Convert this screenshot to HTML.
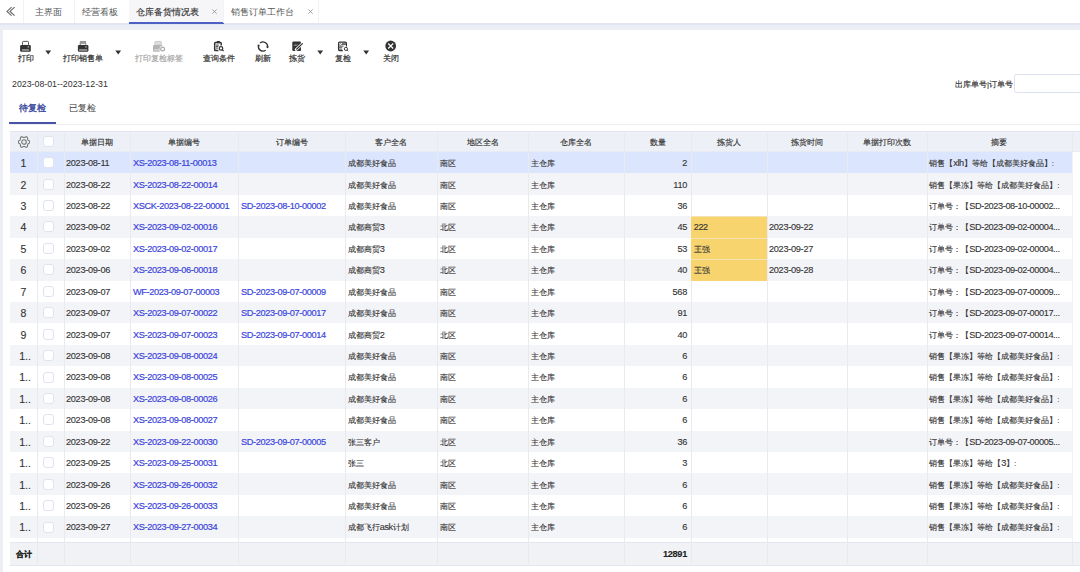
<!DOCTYPE html><html><head><meta charset="utf-8"><style>*{box-sizing:border-box;margin:0;padding:0}
html,body{width:1080px;height:572px;overflow:hidden;background:#fff;font-family:"Liberation Sans",sans-serif;color:#333}
body{position:relative}
.abs{position:absolute;white-space:nowrap}
#tabbar{position:absolute;left:0;top:0;width:1080px;height:23px;background:#fff}
#band{position:absolute;left:0;top:23px;width:1080px;height:549px;background:#eceef6}
#panel{position:absolute;left:2.5px;top:30px;width:1077.5px;height:542px;background:#fff}
.tab{position:absolute;top:0px;height:23px;line-height:23px;font-size:9.45px;color:#555;white-space:nowrap;}
.tdiv{position:absolute;top:0;width:1px;height:23px;background:#f1f2f5}
.tb-label{position:absolute;top:54px;font-size:8px;line-height:10px;color:#333;white-space:nowrap;-webkit-text-stroke:0.2px currentColor}
.caret{position:absolute;width:0;height:0;border-left:2.8px solid transparent;border-right:2.8px solid transparent;border-top:4px solid #333}
#tbl .hdr{position:absolute;left:10px;width:1070px;background:#edf0f6;border-top:1px solid #e3e6ee;box-shadow:inset 0 -1px 0 #e8ebf2}
.vl{position:absolute;width:1px;background:#e8eaf0}
.hl{position:absolute;left:10px;width:1062.2px;height:1px;background:#eceef3}
.ht{position:absolute;text-align:center;font-size:8px;color:#333;white-space:nowrap;padding-top:1px;-webkit-text-stroke:0.15px #333}
.row{position:absolute;left:10px;width:1062.2px;background:#fff}
.row.odd{background:#f3f4f8}
.row.sel{background:#dbe5fd}
.yel{position:absolute;background:#f7d46e;box-shadow:0 -1px 0 #f3e3b6}
.t{position:absolute;font-size:8px;color:#333;white-space:nowrap;padding-left:2.7px;padding-top:1.2px;overflow:hidden;-webkit-text-stroke:0.12px currentColor}
.t.idx{text-align:center;padding-left:0;font-size:10.5px}
.t.lnk{color:#3b45dd;font-size:9.2px;letter-spacing:-0.35px;padding-left:3px;-webkit-text-stroke:0.2px #3b45dd}
.t.dt{font-size:9.2px;letter-spacing:-0.3px;padding-left:2px}
.t.num{text-align:right;padding-right:4px;font-size:9.2px;letter-spacing:-0.3px}
.cb{position:absolute;width:11px;height:11px;border:1px solid #dde3f0;border-radius:3px;background:#fff}
.gear{position:absolute}
.ftr{position:absolute;left:10px;width:1070px;background:#f1f2f6;border-top:1px solid #e3e6ee;border-bottom:1px solid #e3e6ee}
.ftt{font-weight:bold;color:#222;padding-top:1px}
.t .a{font-size:9.2px;letter-spacing:-0.4px}
.t.idx2{padding-left:3px}
.vl.vlast{background:#f1f2f6}
</style></head><body>
<div id="band"></div><div style="position:absolute;left:0;top:23px;width:1080px;height:1.5px;background:#e2e5f0"></div>
<div id="tabbar">
  <svg style="position:absolute;left:0;top:0" width="23" height="23" viewBox="0 0 23 23"><path d="M11.6 7.2 L7 11.4 L11.6 15.6 M14.6 7.2 L10 11.4 L14.6 15.6" fill="none" stroke="#666" stroke-width="1.1"/></svg>
  <div class="tdiv" style="left:23px"></div>
  <div class="tab" style="left:35px">主界面</div>
  <div class="tdiv" style="left:74px"></div>
  <div class="tab" style="left:82px">经营看板</div>
  <div style="position:absolute;left:128.5px;top:0;width:95px;height:23px;background:#f6f6f8"></div>
  <div style="position:absolute;left:128.5px;top:21.5px;width:95px;height:2px;background:#4d60c4"></div>
  <div class="tab" style="left:135.5px;color:#333;-webkit-text-stroke:0.15px #333">仓库备货情况表</div>
  <svg style="position:absolute;left:210px;top:7px" width="9" height="9" viewBox="0 0 9 9"><path d="M2.3 2.4 L6.7 6.8 M6.7 2.4 L2.3 6.8" stroke="#999" stroke-width="0.9"/></svg>
  <div class="tdiv" style="left:223px"></div>
  <div class="tab" style="left:231px">销售订单工作台</div>
  <svg style="position:absolute;left:305.5px;top:7px" width="9" height="9" viewBox="0 0 9 9"><path d="M2.3 2.4 L6.7 6.8 M6.7 2.4 L2.3 6.8" stroke="#999" stroke-width="0.9"/></svg>
  <div class="tdiv" style="left:318px"></div>
</div>
<div id="panel"></div>
<!-- toolbar -->
<div class="tb-label" style="left:17.6px">打印</div>
<svg style="position:absolute;left:45.1px;top:50px" width="7" height="5" viewBox="0 0 7 5"><path d="M0.3 0.5 H6.1 L3.2 4.4Z" fill="#333"/></svg>
<div class="tb-label" style="left:62.8px">打印销售单</div>
<svg style="position:absolute;left:114.8px;top:50px" width="7" height="5" viewBox="0 0 7 5"><path d="M0.3 0.5 H6.1 L3.2 4.4Z" fill="#333"/></svg>
<div class="tb-label" style="left:135px;color:#a9a9a9">打印复检标签</div>
<div class="tb-label" style="left:202.8px">查询条件</div>
<div class="tb-label" style="left:255.4px">刷新</div>
<div class="tb-label" style="left:289px">拣货</div>
<svg style="position:absolute;left:317.1px;top:50px" width="7" height="5" viewBox="0 0 7 5"><path d="M0.3 0.5 H6.1 L3.2 4.4Z" fill="#333"/></svg>
<div class="tb-label" style="left:334.8px">复检</div>
<svg style="position:absolute;left:362.8px;top:50px" width="7" height="5" viewBox="0 0 7 5"><path d="M0.3 0.5 H6.1 L3.2 4.4Z" fill="#333"/></svg>
<div class="tb-label" style="left:382.7px">关闭</div>
<div class="abs" style="left:12px;top:78px;font-size:8.8px;line-height:12px;color:#333">2023-08-01--2023-12-31</div>
<div class="abs" style="left:955px;top:79px;font-size:8px;line-height:12px;color:#333;-webkit-text-stroke:0.15px #333">出库单号|订单号</div>
<div style="position:absolute;left:1013.5px;top:74.4px;width:80px;height:18.2px;border:1px solid #dce1ee;border-radius:2.5px;background:#fff"></div>
<div class="abs" style="left:18.9px;top:101.7px;font-size:9.3px;line-height:12px;color:#3a4aa0;-webkit-text-stroke:0.35px #3a4aa0">待复检</div>
<div class="abs" style="left:68.9px;top:101.7px;font-size:9.3px;line-height:12px;color:#555;-webkit-text-stroke:0.1px #555">已复检</div>
<div style="position:absolute;left:10px;top:123.5px;width:1070px;height:1px;background:#eceef3"></div>
<div style="position:absolute;left:9.4px;top:122.2px;width:46.7px;height:2px;background:#4a54a6"></div>
<!-- icons -->
<svg style="position:absolute;left:16px;top:38px" width="20" height="16" viewBox="0 0 20 16">
  <rect x="6.5" y="3.4" width="6" height="4" rx="0.8" fill="#fff" stroke="#555" stroke-width="1"/>
  <rect x="4.1" y="6.9" width="10.7" height="6.8" rx="1.3" fill="#333"/>
  <rect x="5.9" y="11" width="7.2" height="1.9" fill="#8c8c8c"/>
  <circle cx="12.3" cy="8.8" r="0.9" fill="#9a9a9a"/>
</svg>
<svg style="position:absolute;left:73px;top:38px" width="20" height="16" viewBox="0 0 20 16">
  <path d="M6.9 3.1 H13 L13.4 6.9 H6.5Z" fill="#9a9a9a"/>
  <rect x="8" y="5.9" width="4.2" height="1" fill="#fff"/>
  <rect x="4.9" y="6.9" width="10.5" height="6.8" rx="1.3" fill="#333"/>
  <rect x="6.1" y="11" width="8.1" height="1.9" fill="#8c8c8c"/>
  <circle cx="13" cy="8.8" r="0.9" fill="#9a9a9a"/>
</svg>
<svg style="position:absolute;left:150px;top:38px" width="20" height="16" viewBox="0 0 20 16">
  <rect x="4.9" y="3.4" width="6.4" height="3.8" rx="0.8" fill="#ddd" stroke="#c4c4c4" stroke-width="0.9"/>
  <path d="M4.2 6.9 H11.8 Q12.6 6.9 12.8 7.6 A3.6 3.6 0 0 0 9.6 11.6 L9.6 13.7 H4.2 Q3 13.7 3 12.5 V8.1 Q3 6.9 4.2 6.9Z" fill="#b4b4b4"/>
  <rect x="4.2" y="11" width="4.8" height="1.8" fill="#d2d2d2"/>
  <circle cx="12.6" cy="11" r="1.9" fill="none" stroke="#aaa" stroke-width="1.2"/>
</svg>
<svg style="position:absolute;left:210px;top:38px" width="20" height="16" viewBox="0 0 20 16">
  <path d="M11.2 7.4 V5.2 Q11.2 4.4 10.4 4.4 H5.5 Q4.7 4.4 4.7 5.2 V11.9 Q4.7 12.6 5.5 12.6 H8.4" fill="none" stroke="#333" stroke-width="1.5"/>
  <rect x="6.8" y="3.1" width="3.2" height="2.2" rx="0.5" fill="#333"/>
  <path d="M6 7.1 H8.8 M6 8.6 H8.4 M6 10.1 H8" stroke="#333" stroke-width="0.9"/>
  <circle cx="11" cy="10.4" r="1.75" fill="none" stroke="#333" stroke-width="1.2"/>
  <path d="M12.2 11.6 L13.6 13" stroke="#333" stroke-width="1.2"/>
</svg>
<svg style="position:absolute;left:253px;top:38px" width="20" height="16" viewBox="0 0 20 16">
  <path d="M7.05 4.97 A4.6 4.6 0 0 1 14.54 9.22" fill="none" stroke="#333" stroke-width="1.3"/>
  <path d="M12.7 12.22 A4.6 4.6 0 0 1 5.5 7.54" fill="none" stroke="#333" stroke-width="1.3"/>
  <circle cx="14.5" cy="9.1" r="1.05" fill="#333"/>
  <circle cx="5.6" cy="7.6" r="1.05" fill="#333"/>
</svg>
<svg style="position:absolute;left:287px;top:38px" width="20" height="16" viewBox="0 0 20 16">
  <rect x="5.3" y="3.6" width="8.7" height="9.5" rx="1.1" fill="#333"/>
  <path d="M9.2 11.6 L15.6 5.4" stroke="#fff" stroke-width="2.8" stroke-linecap="round"/>
  <path d="M9.6 11.2 L15.4 5.6" stroke="#333" stroke-width="1.2" stroke-linecap="round"/>
  <path d="M7.2 7.6 Q7.9 6.3 8.7 7.1 Q9.5 7.8 10.3 6.5" fill="none" stroke="#c8c8c8" stroke-width="1"/>
</svg>
<svg style="position:absolute;left:333px;top:38px" width="20" height="16" viewBox="0 0 20 16">
  <path d="M9.8 12.6 H6.6 Q5.5 12.6 5.5 11.5 V5.2 Q5.5 4.1 6.6 4.1 H12.4 Q13.5 4.1 13.5 5.2 V8.4" fill="none" stroke="#333" stroke-width="1.1"/>
  <path d="M9 5.3 H13 M8.3 6.6 H12.9 M6 8.2 H10.6 M6 9.7 H9.2 M6 11.2 H9.2" stroke="#444" stroke-width="0.9"/>
  <circle cx="7.3" cy="6.5" r="1" fill="#fff" stroke="#555" stroke-width="0.6"/>
  <circle cx="12.9" cy="10.9" r="1.6" fill="#fff" stroke="#333" stroke-width="0.95"/>
  <path d="M14 12 L15.2 13.2" stroke="#444" stroke-width="0.9"/>
</svg>
<svg style="position:absolute;left:381px;top:36px" width="20" height="20" viewBox="0 0 20 20">
  <circle cx="9.7" cy="10" r="5.4" fill="#333"/>
  <path d="M7.2 7.5 L12.2 12.5 M12.2 7.5 L7.2 12.5" stroke="#fff" stroke-width="1.15"/>
</svg>

<div id="tbl">
<div class="hdr" style="top:131px;height:21px"></div>
<div class="vl" style="left:37px;top:131px;height:21px"></div>
<div class="vl" style="left:64px;top:131px;height:21px"></div>
<div class="vl" style="left:130px;top:131px;height:21px"></div>
<div class="ht" style="left:64px;width:66px;top:131px;height:21px;line-height:21px">单据日期</div>
<div class="vl" style="left:238px;top:131px;height:21px"></div>
<div class="ht" style="left:130px;width:108px;top:131px;height:21px;line-height:21px">单据编号</div>
<div class="vl" style="left:345px;top:131px;height:21px"></div>
<div class="ht" style="left:238px;width:107px;top:131px;height:21px;line-height:21px">订单编号</div>
<div class="vl" style="left:437.4px;top:131px;height:21px"></div>
<div class="ht" style="left:345px;width:92.4px;top:131px;height:21px;line-height:21px">客户全名</div>
<div class="vl" style="left:528px;top:131px;height:21px"></div>
<div class="ht" style="left:437.4px;width:90.6px;top:131px;height:21px;line-height:21px">地区全名</div>
<div class="vl" style="left:624px;top:131px;height:21px"></div>
<div class="ht" style="left:528px;width:96px;top:131px;height:21px;line-height:21px">仓库全名</div>
<div class="vl" style="left:691px;top:131px;height:21px"></div>
<div class="ht" style="left:624px;width:67px;top:131px;height:21px;line-height:21px">数量</div>
<div class="vl" style="left:767px;top:131px;height:21px"></div>
<div class="ht" style="left:691px;width:76px;top:131px;height:21px;line-height:21px">拣货人</div>
<div class="vl" style="left:847.4px;top:131px;height:21px"></div>
<div class="ht" style="left:767px;width:80.4px;top:131px;height:21px;line-height:21px">拣货时间</div>
<div class="vl" style="left:926.6px;top:131px;height:21px"></div>
<div class="ht" style="left:847.4px;width:79.2px;top:131px;height:21px;line-height:21px">单据打印次数</div>
<div class="vl" style="left:1072.2px;top:131px;height:21px"></div>
<div class="ht" style="left:926.6px;width:145.6px;top:131px;height:21px;line-height:21px">摘要</div>
<svg class="gear" style="left:18.2px;top:135.6px" width="12" height="12" viewBox="0 0 12 12"><path d="M11.80 6.00 L11.76 6.30 L11.64 6.59 L11.44 6.86 L11.20 7.11 L10.93 7.32 L10.64 7.51 L10.38 7.68 L10.14 7.84 L9.95 8.01 L9.81 8.20 L9.72 8.42 L9.67 8.66 L9.64 8.95 L9.63 9.27 L9.61 9.61 L9.56 9.95 L9.47 10.28 L9.33 10.58 L9.14 10.84 L8.90 11.02 L8.62 11.14 L8.30 11.18 L7.98 11.15 L7.64 11.06 L7.32 10.93 L7.02 10.78 L6.73 10.63 L6.47 10.51 L6.23 10.43 L6.00 10.40 L5.77 10.43 L5.53 10.51 L5.27 10.63 L4.98 10.78 L4.68 10.93 L4.36 11.06 L4.02 11.15 L3.70 11.18 L3.38 11.14 L3.10 11.02 L2.86 10.84 L2.67 10.58 L2.53 10.28 L2.44 9.95 L2.39 9.61 L2.37 9.27 L2.36 8.95 L2.33 8.66 L2.28 8.42 L2.19 8.20 L2.05 8.01 L1.86 7.84 L1.62 7.68 L1.36 7.51 L1.07 7.32 L0.80 7.11 L0.56 6.86 L0.36 6.59 L0.24 6.30 L0.20 6.00 L0.24 5.70 L0.36 5.41 L0.56 5.14 L0.80 4.89 L1.07 4.68 L1.36 4.49 L1.62 4.32 L1.86 4.16 L2.05 3.99 L2.19 3.80 L2.28 3.58 L2.33 3.34 L2.36 3.05 L2.37 2.73 L2.39 2.39 L2.44 2.05 L2.53 1.72 L2.67 1.42 L2.86 1.16 L3.10 0.98 L3.38 0.86 L3.70 0.82 L4.02 0.85 L4.36 0.94 L4.68 1.07 L4.98 1.22 L5.27 1.37 L5.53 1.49 L5.77 1.57 L6.00 1.60 L6.23 1.57 L6.47 1.49 L6.73 1.37 L7.02 1.22 L7.32 1.07 L7.64 0.94 L7.98 0.85 L8.30 0.82 L8.62 0.86 L8.90 0.98 L9.14 1.16 L9.33 1.42 L9.47 1.72 L9.56 2.05 L9.61 2.39 L9.63 2.73 L9.64 3.05 L9.67 3.34 L9.72 3.58 L9.81 3.80 L9.95 3.99 L10.14 4.16 L10.38 4.32 L10.64 4.49 L10.93 4.68 L11.20 4.89 L11.44 5.14 L11.64 5.41 L11.76 5.70 L11.80 6.00Z" fill="none" stroke="#707070" stroke-width="1.05"/><circle cx="6" cy="6" r="2.3" fill="none" stroke="#707070" stroke-width="1.05"/></svg>
<div class="cb" style="left:43px;top:136px"></div>
<div class="row sel" style="top:152px;height:21.43px"></div>
<div class="row odd" style="top:173.43px;height:21.43px"></div>
<div class="row" style="top:194.86px;height:21.43px"></div>
<div class="row odd" style="top:216.29px;height:21.43px"></div>
<div class="row" style="top:237.72px;height:21.43px"></div>
<div class="row odd" style="top:259.15px;height:21.43px"></div>
<div class="row" style="top:280.58px;height:21.43px"></div>
<div class="row odd" style="top:302.01px;height:21.43px"></div>
<div class="row" style="top:323.44px;height:21.43px"></div>
<div class="row odd" style="top:344.87px;height:21.43px"></div>
<div class="row" style="top:366.3px;height:21.43px"></div>
<div class="row odd" style="top:387.73px;height:21.43px"></div>
<div class="row" style="top:409.16px;height:21.43px"></div>
<div class="row odd" style="top:430.59px;height:21.43px"></div>
<div class="row" style="top:452.02px;height:21.43px"></div>
<div class="row odd" style="top:473.45px;height:21.43px"></div>
<div class="row" style="top:494.88px;height:21.43px"></div>
<div class="row odd" style="top:516.31px;height:21.43px"></div>
<div class="vl" style="left:37px;top:152px;height:390px"></div>
<div class="vl" style="left:64px;top:152px;height:390px"></div>
<div class="vl" style="left:130px;top:152px;height:390px"></div>
<div class="vl" style="left:238px;top:152px;height:390px"></div>
<div class="vl" style="left:345px;top:152px;height:390px"></div>
<div class="vl" style="left:437.4px;top:152px;height:390px"></div>
<div class="vl" style="left:528px;top:152px;height:390px"></div>
<div class="vl" style="left:624px;top:152px;height:390px"></div>
<div class="vl" style="left:691px;top:152px;height:390px"></div>
<div class="vl" style="left:767px;top:152px;height:390px"></div>
<div class="vl" style="left:847.4px;top:152px;height:390px"></div>
<div class="vl" style="left:926.6px;top:152px;height:390px"></div>
<div class="vl vlast" style="left:1072.2px;top:152px;height:390px"></div>
<div class="yel" style="left:691px;top:217.29px;width:76px;height:20.93px"></div>
<div class="yel" style="left:691px;top:238.72px;width:76px;height:20.93px"></div>
<div class="yel" style="left:691px;top:260.15px;width:76px;height:20.93px"></div>
<div class="t idx" style="left:10px;width:27px;top:152px;height:21.43px;line-height:21.43px">1</div>
<div class="cb" style="left:43px;top:157.2px"></div>
<div class="t dt" style="left:64px;width:66px;top:152px;height:21.43px;line-height:21.43px">2023-08-11</div>
<div class="t lnk" style="left:130px;width:108px;top:152px;height:21.43px;line-height:21.43px">XS-2023-08-11-00013</div>
<div class="t" style="left:345px;width:92.4px;top:152px;height:21.43px;line-height:21.43px">成都美好食品</div>
<div class="t" style="left:437.4px;width:90.6px;top:152px;height:21.43px;line-height:21.43px">南区</div>
<div class="t" style="left:528px;width:96px;top:152px;height:21.43px;line-height:21.43px">主仓库</div>
<div class="t num" style="left:624px;width:67px;top:152px;height:21.43px;line-height:21.43px">2</div>
<div class="t" style="left:926.6px;width:145.6px;top:152px;height:21.43px;line-height:21.43px">销售【<span class="a">xlh</span>】等给【成都美好食品】:</div>
<div class="t idx" style="left:10px;width:27px;top:173.43px;height:21.43px;line-height:21.43px">2</div>
<div class="cb" style="left:43px;top:178.63px"></div>
<div class="t dt" style="left:64px;width:66px;top:173.43px;height:21.43px;line-height:21.43px">2023-08-22</div>
<div class="t lnk" style="left:130px;width:108px;top:173.43px;height:21.43px;line-height:21.43px">XS-2023-08-22-00014</div>
<div class="t" style="left:345px;width:92.4px;top:173.43px;height:21.43px;line-height:21.43px">成都美好食品</div>
<div class="t" style="left:437.4px;width:90.6px;top:173.43px;height:21.43px;line-height:21.43px">南区</div>
<div class="t" style="left:528px;width:96px;top:173.43px;height:21.43px;line-height:21.43px">主仓库</div>
<div class="t num" style="left:624px;width:67px;top:173.43px;height:21.43px;line-height:21.43px">110</div>
<div class="t" style="left:926.6px;width:145.6px;top:173.43px;height:21.43px;line-height:21.43px">销售【果冻】等给【成都美好食品】:</div>
<div class="t idx" style="left:10px;width:27px;top:194.86px;height:21.43px;line-height:21.43px">3</div>
<div class="cb" style="left:43px;top:200.06px"></div>
<div class="t dt" style="left:64px;width:66px;top:194.86px;height:21.43px;line-height:21.43px">2023-08-22</div>
<div class="t lnk" style="left:130px;width:108px;top:194.86px;height:21.43px;line-height:21.43px">XSCK-2023-08-22-00001</div>
<div class="t lnk" style="left:238px;width:107px;top:194.86px;height:21.43px;line-height:21.43px">SD-2023-08-10-00002</div>
<div class="t" style="left:345px;width:92.4px;top:194.86px;height:21.43px;line-height:21.43px">成都美好食品</div>
<div class="t" style="left:437.4px;width:90.6px;top:194.86px;height:21.43px;line-height:21.43px">南区</div>
<div class="t" style="left:528px;width:96px;top:194.86px;height:21.43px;line-height:21.43px">主仓库</div>
<div class="t num" style="left:624px;width:67px;top:194.86px;height:21.43px;line-height:21.43px">36</div>
<div class="t" style="left:926.6px;width:145.6px;top:194.86px;height:21.43px;line-height:21.43px">订单号：【<span class="a">SD-2023-08-10-00002...</span></div>
<div class="t idx" style="left:10px;width:27px;top:216.29px;height:21.43px;line-height:21.43px">4</div>
<div class="cb" style="left:43px;top:221.49px"></div>
<div class="t dt" style="left:64px;width:66px;top:216.29px;height:21.43px;line-height:21.43px">2023-09-02</div>
<div class="t lnk" style="left:130px;width:108px;top:216.29px;height:21.43px;line-height:21.43px">XS-2023-09-02-00016</div>
<div class="t" style="left:345px;width:92.4px;top:216.29px;height:21.43px;line-height:21.43px">成都商贸<span class="a">3</span></div>
<div class="t" style="left:437.4px;width:90.6px;top:216.29px;height:21.43px;line-height:21.43px">北区</div>
<div class="t" style="left:528px;width:96px;top:216.29px;height:21.43px;line-height:21.43px">主仓库</div>
<div class="t num" style="left:624px;width:67px;top:216.29px;height:21.43px;line-height:21.43px">45</div>
<div class="t" style="left:691px;width:76px;top:216.29px;height:21.43px;line-height:21.43px"><span class="a">222</span></div>
<div class="t dt" style="left:767px;width:80.4px;top:216.29px;height:21.43px;line-height:21.43px">2023-09-22</div>
<div class="t" style="left:926.6px;width:145.6px;top:216.29px;height:21.43px;line-height:21.43px">订单号：【<span class="a">SD-2023-09-02-00004...</span></div>
<div class="t idx" style="left:10px;width:27px;top:237.72px;height:21.43px;line-height:21.43px">5</div>
<div class="cb" style="left:43px;top:242.92px"></div>
<div class="t dt" style="left:64px;width:66px;top:237.72px;height:21.43px;line-height:21.43px">2023-09-02</div>
<div class="t lnk" style="left:130px;width:108px;top:237.72px;height:21.43px;line-height:21.43px">XS-2023-09-02-00017</div>
<div class="t" style="left:345px;width:92.4px;top:237.72px;height:21.43px;line-height:21.43px">成都商贸<span class="a">3</span></div>
<div class="t" style="left:437.4px;width:90.6px;top:237.72px;height:21.43px;line-height:21.43px">北区</div>
<div class="t" style="left:528px;width:96px;top:237.72px;height:21.43px;line-height:21.43px">主仓库</div>
<div class="t num" style="left:624px;width:67px;top:237.72px;height:21.43px;line-height:21.43px">53</div>
<div class="t" style="left:691px;width:76px;top:237.72px;height:21.43px;line-height:21.43px">王强</div>
<div class="t dt" style="left:767px;width:80.4px;top:237.72px;height:21.43px;line-height:21.43px">2023-09-27</div>
<div class="t" style="left:926.6px;width:145.6px;top:237.72px;height:21.43px;line-height:21.43px">订单号：【<span class="a">SD-2023-09-02-00004...</span></div>
<div class="t idx" style="left:10px;width:27px;top:259.15px;height:21.43px;line-height:21.43px">6</div>
<div class="cb" style="left:43px;top:264.35px"></div>
<div class="t dt" style="left:64px;width:66px;top:259.15px;height:21.43px;line-height:21.43px">2023-09-06</div>
<div class="t lnk" style="left:130px;width:108px;top:259.15px;height:21.43px;line-height:21.43px">XS-2023-09-06-00018</div>
<div class="t" style="left:345px;width:92.4px;top:259.15px;height:21.43px;line-height:21.43px">成都商贸<span class="a">3</span></div>
<div class="t" style="left:437.4px;width:90.6px;top:259.15px;height:21.43px;line-height:21.43px">北区</div>
<div class="t" style="left:528px;width:96px;top:259.15px;height:21.43px;line-height:21.43px">主仓库</div>
<div class="t num" style="left:624px;width:67px;top:259.15px;height:21.43px;line-height:21.43px">40</div>
<div class="t" style="left:691px;width:76px;top:259.15px;height:21.43px;line-height:21.43px">王强</div>
<div class="t dt" style="left:767px;width:80.4px;top:259.15px;height:21.43px;line-height:21.43px">2023-09-28</div>
<div class="t" style="left:926.6px;width:145.6px;top:259.15px;height:21.43px;line-height:21.43px">订单号：【<span class="a">SD-2023-09-02-00004...</span></div>
<div class="t idx" style="left:10px;width:27px;top:280.58px;height:21.43px;line-height:21.43px">7</div>
<div class="cb" style="left:43px;top:285.78px"></div>
<div class="t dt" style="left:64px;width:66px;top:280.58px;height:21.43px;line-height:21.43px">2023-09-07</div>
<div class="t lnk" style="left:130px;width:108px;top:280.58px;height:21.43px;line-height:21.43px">WF-2023-09-07-00003</div>
<div class="t lnk" style="left:238px;width:107px;top:280.58px;height:21.43px;line-height:21.43px">SD-2023-09-07-00009</div>
<div class="t" style="left:345px;width:92.4px;top:280.58px;height:21.43px;line-height:21.43px">成都美好食品</div>
<div class="t" style="left:437.4px;width:90.6px;top:280.58px;height:21.43px;line-height:21.43px">南区</div>
<div class="t" style="left:528px;width:96px;top:280.58px;height:21.43px;line-height:21.43px">主仓库</div>
<div class="t num" style="left:624px;width:67px;top:280.58px;height:21.43px;line-height:21.43px">568</div>
<div class="t" style="left:926.6px;width:145.6px;top:280.58px;height:21.43px;line-height:21.43px">订单号：【<span class="a">SD-2023-09-07-00009...</span></div>
<div class="t idx" style="left:10px;width:27px;top:302.01px;height:21.43px;line-height:21.43px">8</div>
<div class="cb" style="left:43px;top:307.21px"></div>
<div class="t dt" style="left:64px;width:66px;top:302.01px;height:21.43px;line-height:21.43px">2023-09-07</div>
<div class="t lnk" style="left:130px;width:108px;top:302.01px;height:21.43px;line-height:21.43px">XS-2023-09-07-00022</div>
<div class="t lnk" style="left:238px;width:107px;top:302.01px;height:21.43px;line-height:21.43px">SD-2023-09-07-00017</div>
<div class="t" style="left:345px;width:92.4px;top:302.01px;height:21.43px;line-height:21.43px">成都美好食品</div>
<div class="t" style="left:437.4px;width:90.6px;top:302.01px;height:21.43px;line-height:21.43px">南区</div>
<div class="t" style="left:528px;width:96px;top:302.01px;height:21.43px;line-height:21.43px">主仓库</div>
<div class="t num" style="left:624px;width:67px;top:302.01px;height:21.43px;line-height:21.43px">91</div>
<div class="t" style="left:926.6px;width:145.6px;top:302.01px;height:21.43px;line-height:21.43px">订单号：【<span class="a">SD-2023-09-07-00017...</span></div>
<div class="t idx" style="left:10px;width:27px;top:323.44px;height:21.43px;line-height:21.43px">9</div>
<div class="cb" style="left:43px;top:328.64px"></div>
<div class="t dt" style="left:64px;width:66px;top:323.44px;height:21.43px;line-height:21.43px">2023-09-07</div>
<div class="t lnk" style="left:130px;width:108px;top:323.44px;height:21.43px;line-height:21.43px">XS-2023-09-07-00023</div>
<div class="t lnk" style="left:238px;width:107px;top:323.44px;height:21.43px;line-height:21.43px">SD-2023-09-07-00014</div>
<div class="t" style="left:345px;width:92.4px;top:323.44px;height:21.43px;line-height:21.43px">成都商贸<span class="a">2</span></div>
<div class="t" style="left:437.4px;width:90.6px;top:323.44px;height:21.43px;line-height:21.43px">北区</div>
<div class="t" style="left:528px;width:96px;top:323.44px;height:21.43px;line-height:21.43px">主仓库</div>
<div class="t num" style="left:624px;width:67px;top:323.44px;height:21.43px;line-height:21.43px">40</div>
<div class="t" style="left:926.6px;width:145.6px;top:323.44px;height:21.43px;line-height:21.43px">订单号：【<span class="a">SD-2023-09-07-00014...</span></div>
<div class="t idx idx2" style="left:10px;width:27px;top:344.87px;height:21.43px;line-height:21.43px">1..</div>
<div class="cb" style="left:43px;top:350.07px"></div>
<div class="t dt" style="left:64px;width:66px;top:344.87px;height:21.43px;line-height:21.43px">2023-09-08</div>
<div class="t lnk" style="left:130px;width:108px;top:344.87px;height:21.43px;line-height:21.43px">XS-2023-09-08-00024</div>
<div class="t" style="left:345px;width:92.4px;top:344.87px;height:21.43px;line-height:21.43px">成都美好食品</div>
<div class="t" style="left:437.4px;width:90.6px;top:344.87px;height:21.43px;line-height:21.43px">南区</div>
<div class="t" style="left:528px;width:96px;top:344.87px;height:21.43px;line-height:21.43px">主仓库</div>
<div class="t num" style="left:624px;width:67px;top:344.87px;height:21.43px;line-height:21.43px">6</div>
<div class="t" style="left:926.6px;width:145.6px;top:344.87px;height:21.43px;line-height:21.43px">销售【果冻】等给【成都美好食品】:</div>
<div class="t idx idx2" style="left:10px;width:27px;top:366.3px;height:21.43px;line-height:21.43px">1..</div>
<div class="cb" style="left:43px;top:371.5px"></div>
<div class="t dt" style="left:64px;width:66px;top:366.3px;height:21.43px;line-height:21.43px">2023-09-08</div>
<div class="t lnk" style="left:130px;width:108px;top:366.3px;height:21.43px;line-height:21.43px">XS-2023-09-08-00025</div>
<div class="t" style="left:345px;width:92.4px;top:366.3px;height:21.43px;line-height:21.43px">成都美好食品</div>
<div class="t" style="left:437.4px;width:90.6px;top:366.3px;height:21.43px;line-height:21.43px">南区</div>
<div class="t" style="left:528px;width:96px;top:366.3px;height:21.43px;line-height:21.43px">主仓库</div>
<div class="t num" style="left:624px;width:67px;top:366.3px;height:21.43px;line-height:21.43px">6</div>
<div class="t" style="left:926.6px;width:145.6px;top:366.3px;height:21.43px;line-height:21.43px">销售【果冻】等给【成都美好食品】:</div>
<div class="t idx idx2" style="left:10px;width:27px;top:387.73px;height:21.43px;line-height:21.43px">1..</div>
<div class="cb" style="left:43px;top:392.93px"></div>
<div class="t dt" style="left:64px;width:66px;top:387.73px;height:21.43px;line-height:21.43px">2023-09-08</div>
<div class="t lnk" style="left:130px;width:108px;top:387.73px;height:21.43px;line-height:21.43px">XS-2023-09-08-00026</div>
<div class="t" style="left:345px;width:92.4px;top:387.73px;height:21.43px;line-height:21.43px">成都美好食品</div>
<div class="t" style="left:437.4px;width:90.6px;top:387.73px;height:21.43px;line-height:21.43px">南区</div>
<div class="t" style="left:528px;width:96px;top:387.73px;height:21.43px;line-height:21.43px">主仓库</div>
<div class="t num" style="left:624px;width:67px;top:387.73px;height:21.43px;line-height:21.43px">6</div>
<div class="t" style="left:926.6px;width:145.6px;top:387.73px;height:21.43px;line-height:21.43px">销售【果冻】等给【成都美好食品】:</div>
<div class="t idx idx2" style="left:10px;width:27px;top:409.16px;height:21.43px;line-height:21.43px">1..</div>
<div class="cb" style="left:43px;top:414.36px"></div>
<div class="t dt" style="left:64px;width:66px;top:409.16px;height:21.43px;line-height:21.43px">2023-09-08</div>
<div class="t lnk" style="left:130px;width:108px;top:409.16px;height:21.43px;line-height:21.43px">XS-2023-09-08-00027</div>
<div class="t" style="left:345px;width:92.4px;top:409.16px;height:21.43px;line-height:21.43px">成都美好食品</div>
<div class="t" style="left:437.4px;width:90.6px;top:409.16px;height:21.43px;line-height:21.43px">南区</div>
<div class="t" style="left:528px;width:96px;top:409.16px;height:21.43px;line-height:21.43px">主仓库</div>
<div class="t num" style="left:624px;width:67px;top:409.16px;height:21.43px;line-height:21.43px">6</div>
<div class="t" style="left:926.6px;width:145.6px;top:409.16px;height:21.43px;line-height:21.43px">销售【果冻】等给【成都美好食品】:</div>
<div class="t idx idx2" style="left:10px;width:27px;top:430.59px;height:21.43px;line-height:21.43px">1..</div>
<div class="cb" style="left:43px;top:435.79px"></div>
<div class="t dt" style="left:64px;width:66px;top:430.59px;height:21.43px;line-height:21.43px">2023-09-22</div>
<div class="t lnk" style="left:130px;width:108px;top:430.59px;height:21.43px;line-height:21.43px">XS-2023-09-22-00030</div>
<div class="t lnk" style="left:238px;width:107px;top:430.59px;height:21.43px;line-height:21.43px">SD-2023-09-07-00005</div>
<div class="t" style="left:345px;width:92.4px;top:430.59px;height:21.43px;line-height:21.43px">张三客户</div>
<div class="t" style="left:437.4px;width:90.6px;top:430.59px;height:21.43px;line-height:21.43px">北区</div>
<div class="t" style="left:528px;width:96px;top:430.59px;height:21.43px;line-height:21.43px">主仓库</div>
<div class="t num" style="left:624px;width:67px;top:430.59px;height:21.43px;line-height:21.43px">36</div>
<div class="t" style="left:926.6px;width:145.6px;top:430.59px;height:21.43px;line-height:21.43px">订单号：【<span class="a">SD-2023-09-07-00005...</span></div>
<div class="t idx idx2" style="left:10px;width:27px;top:452.02px;height:21.43px;line-height:21.43px">1..</div>
<div class="cb" style="left:43px;top:457.22px"></div>
<div class="t dt" style="left:64px;width:66px;top:452.02px;height:21.43px;line-height:21.43px">2023-09-25</div>
<div class="t lnk" style="left:130px;width:108px;top:452.02px;height:21.43px;line-height:21.43px">XS-2023-09-25-00031</div>
<div class="t" style="left:345px;width:92.4px;top:452.02px;height:21.43px;line-height:21.43px">张三</div>
<div class="t" style="left:437.4px;width:90.6px;top:452.02px;height:21.43px;line-height:21.43px">北区</div>
<div class="t" style="left:528px;width:96px;top:452.02px;height:21.43px;line-height:21.43px">主仓库</div>
<div class="t num" style="left:624px;width:67px;top:452.02px;height:21.43px;line-height:21.43px">3</div>
<div class="t" style="left:926.6px;width:145.6px;top:452.02px;height:21.43px;line-height:21.43px">销售【果冻】等给【<span class="a">3</span>】:</div>
<div class="t idx idx2" style="left:10px;width:27px;top:473.45px;height:21.43px;line-height:21.43px">1..</div>
<div class="cb" style="left:43px;top:478.65px"></div>
<div class="t dt" style="left:64px;width:66px;top:473.45px;height:21.43px;line-height:21.43px">2023-09-26</div>
<div class="t lnk" style="left:130px;width:108px;top:473.45px;height:21.43px;line-height:21.43px">XS-2023-09-26-00032</div>
<div class="t" style="left:345px;width:92.4px;top:473.45px;height:21.43px;line-height:21.43px">成都美好食品</div>
<div class="t" style="left:437.4px;width:90.6px;top:473.45px;height:21.43px;line-height:21.43px">南区</div>
<div class="t" style="left:528px;width:96px;top:473.45px;height:21.43px;line-height:21.43px">主仓库</div>
<div class="t num" style="left:624px;width:67px;top:473.45px;height:21.43px;line-height:21.43px">6</div>
<div class="t" style="left:926.6px;width:145.6px;top:473.45px;height:21.43px;line-height:21.43px">销售【果冻】等给【成都美好食品】:</div>
<div class="t idx idx2" style="left:10px;width:27px;top:494.88px;height:21.43px;line-height:21.43px">1..</div>
<div class="cb" style="left:43px;top:500.08px"></div>
<div class="t dt" style="left:64px;width:66px;top:494.88px;height:21.43px;line-height:21.43px">2023-09-26</div>
<div class="t lnk" style="left:130px;width:108px;top:494.88px;height:21.43px;line-height:21.43px">XS-2023-09-26-00033</div>
<div class="t" style="left:345px;width:92.4px;top:494.88px;height:21.43px;line-height:21.43px">成都美好食品</div>
<div class="t" style="left:437.4px;width:90.6px;top:494.88px;height:21.43px;line-height:21.43px">南区</div>
<div class="t" style="left:528px;width:96px;top:494.88px;height:21.43px;line-height:21.43px">主仓库</div>
<div class="t num" style="left:624px;width:67px;top:494.88px;height:21.43px;line-height:21.43px">6</div>
<div class="t" style="left:926.6px;width:145.6px;top:494.88px;height:21.43px;line-height:21.43px">销售【果冻】等给【成都美好食品】:</div>
<div class="t idx idx2" style="left:10px;width:27px;top:516.31px;height:21.43px;line-height:21.43px">1..</div>
<div class="cb" style="left:43px;top:521.51px"></div>
<div class="t dt" style="left:64px;width:66px;top:516.31px;height:21.43px;line-height:21.43px">2023-09-27</div>
<div class="t lnk" style="left:130px;width:108px;top:516.31px;height:21.43px;line-height:21.43px">XS-2023-09-27-00034</div>
<div class="t" style="left:345px;width:92.4px;top:516.31px;height:21.43px;line-height:21.43px">成都飞行<span class="a">ask</span>计划</div>
<div class="t" style="left:437.4px;width:90.6px;top:516.31px;height:21.43px;line-height:21.43px">南区</div>
<div class="t" style="left:528px;width:96px;top:516.31px;height:21.43px;line-height:21.43px">主仓库</div>
<div class="t num" style="left:624px;width:67px;top:516.31px;height:21.43px;line-height:21.43px">6</div>
<div class="t" style="left:926.6px;width:145.6px;top:516.31px;height:21.43px;line-height:21.43px">销售【果冻】等给【成都美好食品】:</div>
<div class="ftr" style="top:542px;height:23.7px"></div>
<div class="vl" style="left:37px;top:542px;height:23.7px"></div>
<div class="vl" style="left:64px;top:542px;height:23.7px"></div>
<div class="vl" style="left:130px;top:542px;height:23.7px"></div>
<div class="vl" style="left:238px;top:542px;height:23.7px"></div>
<div class="vl" style="left:345px;top:542px;height:23.7px"></div>
<div class="vl" style="left:437.4px;top:542px;height:23.7px"></div>
<div class="vl" style="left:528px;top:542px;height:23.7px"></div>
<div class="vl" style="left:624px;top:542px;height:23.7px"></div>
<div class="vl" style="left:691px;top:542px;height:23.7px"></div>
<div class="vl" style="left:767px;top:542px;height:23.7px"></div>
<div class="vl" style="left:847.4px;top:542px;height:23.7px"></div>
<div class="vl" style="left:926.6px;top:542px;height:23.7px"></div>
<div class="vl" style="left:1072.2px;top:542px;height:23.7px"></div>
<div class="t ftt" style="left:10px;width:27px;text-align:center;padding-left:0;top:542px;height:23.7px;line-height:23.7px">合计</div>
<div class="t num ftt" style="left:624px;width:67px;top:542px;height:23.7px;line-height:23.7px">12891</div>
</div>
</body></html>
